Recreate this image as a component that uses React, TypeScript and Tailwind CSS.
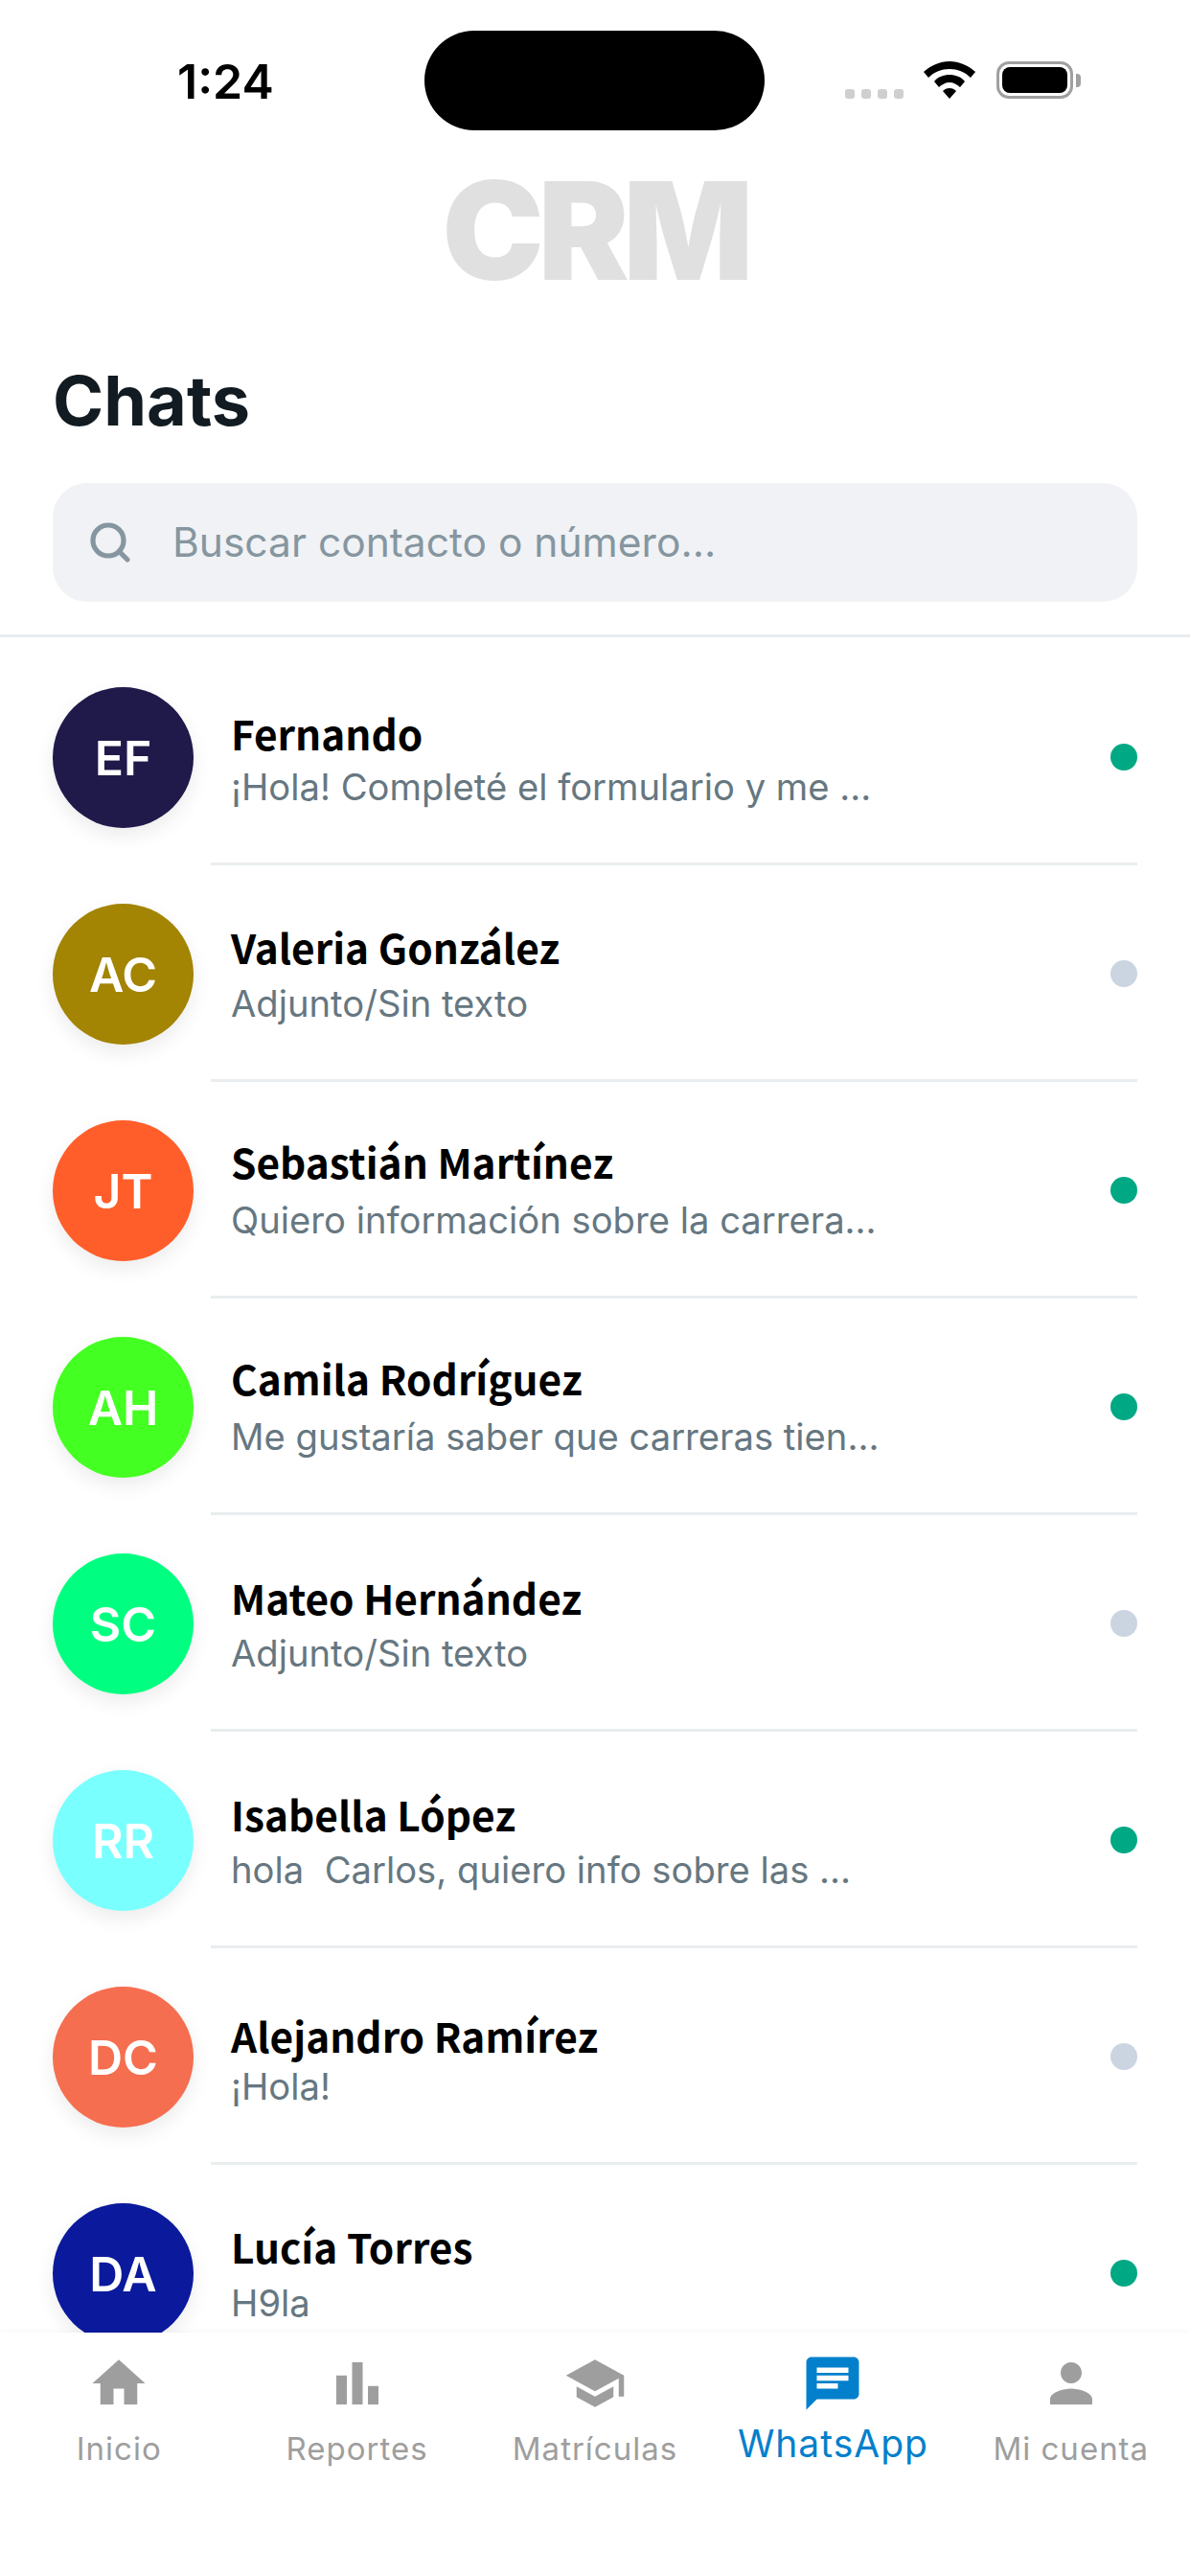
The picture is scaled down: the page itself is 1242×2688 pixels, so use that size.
import { Search } from "lucide-react";
import { MdBarChart, MdChat, MdHome, MdPerson, MdSchool } from "react-icons/md";
import type { IconType } from "react-icons";

// ─── Data ─────────────────────────────────────────────────────────────────────

const chats = [
  { initials: "EF", color: "bg-[#1f1a4a]", name: "Fernando", shift: "", preview: "¡Hola! Completé el formulario y me ...", online: true },
  { initials: "AC", color: "bg-[#a38403]", name: "Valeria González", shift: "-mt-[3px] mb-[3px]", preview: "Adjunto/Sin texto", online: false },
  { initials: "JT", color: "bg-[#ff5e2b]", name: "Sebastián Martínez", shift: "-mt-[5px] mb-[5px]", preview: "Quiero información sobre la carrera...", online: true },
  { initials: "AH", color: "bg-[#44ff22]", name: "Camila Rodríguez", shift: "-mt-[5px] mb-[5px]", preview: "Me gustaría saber que carreras tien...", online: true },
  { initials: "SC", color: "bg-[#00ff80]", name: "Mateo Hernández", shift: "-mt-[2px] mb-[2px]", preview: "Adjunto/Sin texto", online: false },
  { initials: "RR", color: "bg-[#7affff]", name: "Isabella López", shift: "-mt-[2px] mb-[2px]", preview: "hola  Carlos, quiero info sobre las ...", online: true },
  { initials: "DC", color: "bg-[#f56e4f]", name: "Alejandro Ramírez", shift: "mt-[3px] -mb-[3px]", preview: "¡Hola!", online: false },
  { initials: "DA", color: "bg-[#0b1a9c]", name: "Lucía Torres", shift: "-mt-[3px] mb-[3px]", preview: "H9la", online: true },
];

const tabs: { label: string; icon: IconType; active?: boolean }[] = [
  { label: "Inicio", icon: MdHome },
  { label: "Reportes", icon: MdBarChart },
  { label: "Matrículas", icon: MdSchool },
  { label: "WhatsApp", icon: MdChat, active: true },
  { label: "Mi cuenta", icon: MdPerson },
];

// ─── Status bar ───────────────────────────────────────────────────────────────

function StatusBar() {
  return (
    <div className="flex h-[185px] shrink-0 items-start pt-[32px]">
      <div className="w-[443px] pl-[185px] pt-[26px] text-[50px] leading-[54px] font-semibold text-black">1:24</div>
      <div className="h-[104px] w-[355px] rounded-[52px] bg-black" />
      <div className="flex items-end pl-[84px] pt-[32px]">
        <div className="flex gap-[7px]">
          <span className="h-[10px] w-[10px] rounded-[3px] bg-[#cfcfcf]" />
          <span className="h-[10px] w-[10px] rounded-[3px] bg-[#cfcfcf]" />
          <span className="h-[10px] w-[10px] rounded-[3px] bg-[#cfcfcf]" />
          <span className="h-[10px] w-[10px] rounded-[3px] bg-[#cfcfcf]" />
        </div>
        <svg viewBox="0 0 54 39" className="ml-[21px] h-[39px] w-[54px]">
          <path d="M27 0C17 0 8 4 0 11l5 6c6-6 14-9 22-9s16 3 22 9l5-6C46 4 37 0 27 0z" />
          <path d="M27 14c-6 0-12 2-16 7l5 6c3-3 7-5 11-5s8 2 11 5l5-6c-4-5-10-7-16-7z" />
          <path d="M27 28c-3 0-5 1-7 3l7 8 7-8c-2-2-4-3-7-3z" />
        </svg>
        <div className="ml-[22px] flex items-center">
          <div className="h-[39px] w-[80px] rounded-[13px] border-[3px] border-[#a0a0a0] p-[3px]">
            <div className="h-full w-full rounded-[8px] bg-black" />
          </div>
          <div className="ml-[3px] h-[14px] w-[5px] rounded-r-[4px] bg-[#a0a0a0]" />
        </div>
      </div>
    </div>
  );
}

// ─── Row ──────────────────────────────────────────────────────────────────────

function ChatRow({ chat }: { chat: (typeof chats)[number] }) {
  return (
    <div className="relative flex h-[226px] shrink-0 items-start pl-[55px] pr-[55px] pt-[40px]">
      <div
        className={`flex h-[147px] w-[147px] shrink-0 items-center justify-center rounded-full text-[50px] leading-none font-semibold text-white shadow-[0_8px_20px_rgba(0,0,0,0.08)] ${chat.color}`}
      >
        {chat.initials}
      </div>
      <div className="ml-[39px] min-w-0 flex-1 pt-[18px]">
        <p className={`font-['Noto_Sans_CJK_JP',sans-serif] text-[42.4px] leading-[60px] font-bold text-black ${chat.shift}`}>
          {chat.name}
        </p>
        <p className="whitespace-pre text-[38.2px] leading-[52px] text-[#667781]">{chat.preview}</p>
      </div>
      <span className={`mt-[59px] h-[28px] w-[28px] rounded-full ${chat.online ? "bg-[#00a884]" : "bg-[#cbd5e1]"}`} />
      <div className="absolute right-[55px] bottom-0 left-[220px] h-[3px] bg-[#e9edef]" />
    </div>
  );
}

// ─── App ──────────────────────────────────────────────────────────────────────

export default function App() {
  return (
    <div className="flex h-[2688px] w-[1242px] flex-col overflow-hidden bg-white font-['Inter',sans-serif]">
      <StatusBar />

      <div className="flex h-[110px] shrink-0 items-center justify-center text-[142px] leading-none font-black tracking-[-6px] text-[#e0e0e0]">
        CRM
      </div>

      <h1 className="mt-[68px] h-[109px] shrink-0 pl-[55px] text-[72px] leading-[109px] font-bold text-[#111b21]">Chats</h1>

      {/* Search */}
      <div className="mt-[32px] shrink-0 border-b-[3px] border-[#e9edef] px-[55px] pb-[34px]">
        <div className="flex h-[124px] items-center rounded-[36px] bg-[#f0f2f5] pl-[36px]">
          <Search className="h-[48px] w-[48px] text-[#8696a0]" strokeWidth={2.6} />
          <span className="ml-[41px] text-[42.5px] text-[#8696a0]">Buscar contacto o número...</span>
        </div>
      </div>

      {/* List */}
      <div className="flex min-h-0 flex-1 flex-col overflow-hidden pt-[12px]">
        {chats.map((chat) => (
          <ChatRow key={chat.initials} chat={chat} />
        ))}
      </div>

      {/* Bottom nav */}
      <nav className="z-10 grid h-[254px] shrink-0 grid-cols-5 bg-white pt-[20px] shadow-[0_-2px_6px_rgba(0,0,0,0.03)]">
        {tabs.map(({ label, icon: Icon, active }) => (
          <div key={label} className="flex flex-col items-center">
            <Icon className={`h-[66px] w-[66px] ${active ? "text-[#0280cc]" : "text-[#9e9e9e]"}`} />
            <span
              className={
                active
                  ? "mt-[5px] text-[39px] leading-[50px] tracking-[1px] text-[#0280cc]"
                  : "mt-[12px] text-[33px] leading-[46px] tracking-[1px] text-[#9e9e9e]"
              }
            >
              {label}
            </span>
          </div>
        ))}
      </nav>
    </div>
  );
}
